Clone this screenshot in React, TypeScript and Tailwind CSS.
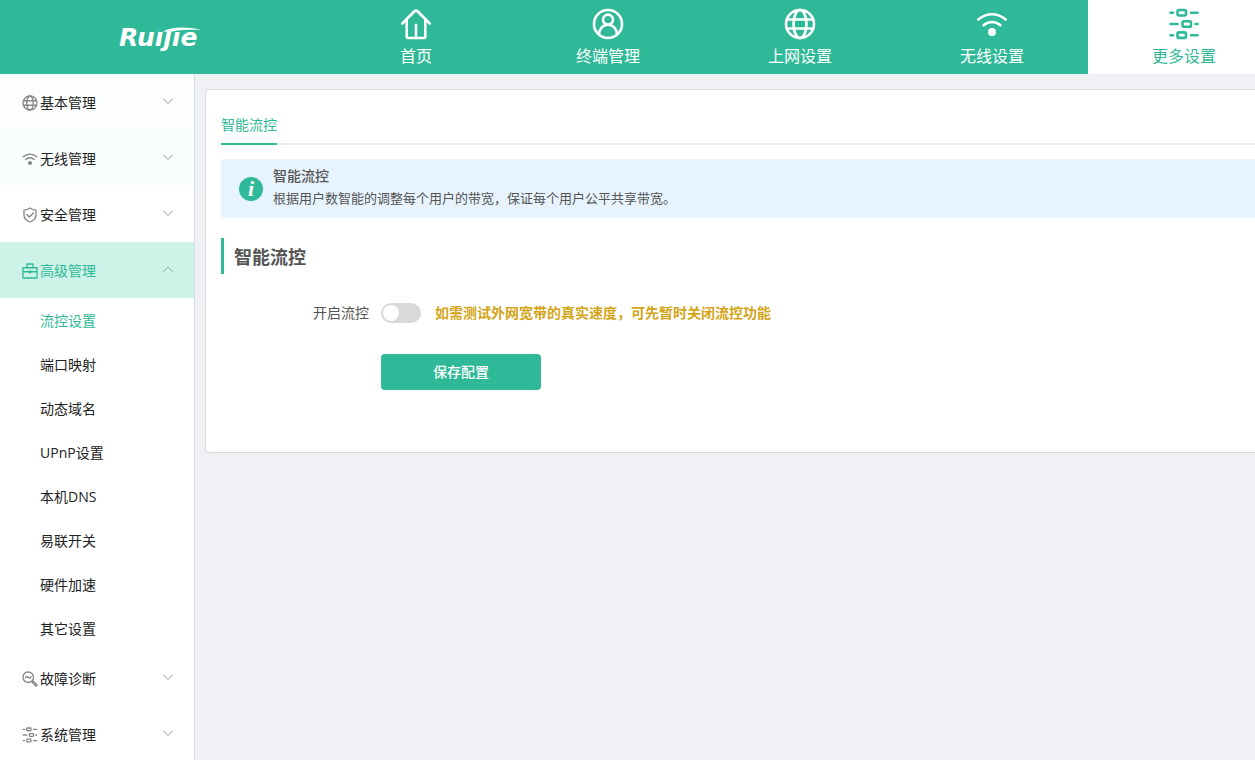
import { useState } from 'react';
import type { ReactNode } from 'react';
import clsx from 'clsx';

interface IconProps {
  className?: string;
}

interface SvgIconProps extends IconProps {
  children: ReactNode;
}

function SvgIcon({ className, children }: SvgIconProps) {
  return (
    <svg
      viewBox="0 0 32 32"
      fill="none"
      stroke="currentColor"
      strokeWidth="2.6"
      strokeLinecap="round"
      strokeLinejoin="round"
      className={className}
      aria-hidden="true"
    >
      {children}
    </svg>
  );
}

function HomeIcon(props: IconProps) {
  return (
    <SvgIcon {...props}>
      <path d="M2.3 15.5 14.8 3q1.2-1 2.4 0l12.5 12.5" />
      <path d="M6.7 12.5v16q0 1.5 1.5 1.5h15.6q1.5 0 1.5-1.5v-16" />
      <path d="M16 17v12.5" />
    </SvgIcon>
  );
}

function UserIcon(props: IconProps) {
  return (
    <SvgIcon {...props}>
      <circle cx="16" cy="16" r="14" />
      <circle cx="16" cy="11.6" r="5" />
      <path d="M7 26c.6-5.6 4.3-9.4 9-9.4s8.4 3.8 9 9.4" />
    </SvgIcon>
  );
}

function GlobeIcon(props: IconProps) {
  return (
    <SvgIcon {...props}>
      <circle cx="16" cy="16" r="14" />
      <ellipse cx="16" cy="16" rx="6.5" ry="14" />
      <path d="M3 11.500h26M3 20.500h26" />
    </SvgIcon>
  );
}

function WifiIcon(props: IconProps) {
  return (
    <SvgIcon {...props}>
      <path d="M2.3 11.6c8.2-7.2 19.2-7.2 27.4 0" />
      <path d="M7.6 17.2c5-4.3 11.8-4.3 16.8 0" />
      <circle cx="16" cy="24" r="4" fill="currentColor" stroke="none" />
    </SvgIcon>
  );
}

function SlidersIcon(props: IconProps) {
  return (
    <SvgIcon {...props}>
      <rect x="9.5" y="2" width="8.5" height="5.5" rx="1.5" />
      <rect x="14.5" y="13.2" width="8.5" height="5.5" rx="1.5" />
      <rect x="9.5" y="24.4" width="8.5" height="5.5" rx="1.5" />
      <path d="M2.5 4.8H5M23 4.800h6.500M2.500 16h7M27.500 16h2M2.500 27.200H5M23 27.200h6.500" />
    </SvgIcon>
  );
}

function ShieldIcon(props: IconProps) {
  return (
    <SvgIcon {...props}>
      <path d="M16 2c3.5 2.8 7.5 4 12 4.2v10.3c0 6-4.5 10.5-12 13.5C8.500 27 4 22.500 4 16.500V6.200C8.500 6 12.500 4.800 16 2Z" />
      <path d="m10 15.5 4.5 4.5 8.5-8" />
    </SvgIcon>
  );
}

function ToolboxIcon(props: IconProps) {
  return (
    <SvgIcon {...props}>
      <path d="M2 9.500h28V30H2zM10 9.500V2h12v7.500M2 17.500h28" />
      <rect x="13.5" y="15" width="5" height="5.5" fill="currentColor" stroke="none" />
    </SvgIcon>
  );
}

function DiagnoseIcon(props: IconProps) {
  return (
    <SvgIcon {...props}>
      <circle cx="12.5" cy="12.5" r="10.5" />
      <path d="M7 14c1.500-4 3.500-4 5.500-1.500s4 2 5.500-1.500" />
      <path d="m20 22 2-2 8 7.500q.5 3-2.500 2.500z" />
    </SvgIcon>
  );
}

function Chevron({ open }: { open?: boolean }) {
  return (
    <svg
      viewBox="0 0 12 12"
      fill="none"
      stroke="currentColor"
      strokeLinecap="round"
      strokeLinejoin="round"
      className={clsx('w-3 h-3 mb-1', open ? 'text-[#6bbfa8]' : 'text-[#909399]')}
      aria-hidden="true"
    >
      <path d={open ? 'M1.5 8.500 6 4l4.500 4.500' : 'M1.5 4 6 8.500 10.500 4'} />
    </svg>
  );
}

function Logo() {
  return (
    <svg viewBox="0 0 84 30" className="w-[84px] h-[30px]" role="img" aria-label="Ruijie">
      <text
        x="1"
        y="24"
        fill="#fff"
        fontSize="25"
        fontWeight="700"
        fontStyle="italic"
        fontFamily="'DejaVu Sans', sans-serif"
      >
        Ruijie
      </text>
      {/* the swoosh takes the place of the dots */}
      <path d="M41 2h42v7.500H41z" fill="#2fb998" />
      <path d="M45 9.500C53 5 66 4 83 7.800 70 7.500 59 8 52 10z" fill="#fff" />
    </svg>
  );
}

const navItems = [
  { label: '首页', icon: HomeIcon },
  { label: '终端管理', icon: UserIcon },
  { label: '上网设置', icon: GlobeIcon },
  { label: '无线设置', icon: WifiIcon },
  { label: '更多设置', icon: SlidersIcon, active: true },
];

const menuItems = [
  { label: '基本管理', icon: GlobeIcon, tint: 'bg-[#fcfefe]' },
  { label: '无线管理', icon: WifiIcon, tint: 'bg-[#f9fefd]' },
  { label: '安全管理', icon: ShieldIcon },
  {
    label: '高级管理',
    icon: ToolboxIcon,
    children: ['流控设置', '端口映射', '动态域名', 'UPnP设置', '本机DNS', '易联开关', '硬件加速', '其它设置'],
  },
  { label: '故障诊断', icon: DiagnoseIcon },
  { label: '系统管理', icon: SlidersIcon },
];

function Header() {
  return (
    <header className="flex h-[74px] shrink-0 overflow-hidden bg-[#2fb998]">
      <div className="flex w-80 shrink-0 items-center justify-center">
        <Logo />
      </div>
      <nav className="flex">
        {navItems.map(({ label, icon: Icon, active }) => (
          <a
            key={label}
            href="#"
            className={clsx(
              'flex w-48 shrink-0 flex-col items-center pt-2 text-base leading-8',
              active ? 'bg-white text-[#2fb998]' : 'text-white'
            )}
          >
            <Icon className="w-8 h-8" />
            {label}
          </a>
        ))}
      </nav>
    </header>
  );
}

function Sidebar() {
  const [opened, setOpened] = useState('高级管理');
  const [current, setCurrent] = useState('流控设置');

  return (
    <aside className="w-[195px] shrink-0 overflow-hidden border-r border-[#d8dce5] bg-white text-sm text-[#222]">
      {menuItems.map(({ label, icon: Icon, tint, children }) => {
        const open = opened === label;
        return (
          <div key={label}>
            <button
              type="button"
              onClick={() => setOpened(open ? '' : label)}
              className={clsx(
                'flex h-14 w-full items-center pt-0.5 pl-[22px] pr-5 text-left',
                open ? 'bg-[#cdf2e8] text-[#2fb998]' : tint
              )}
            >
              <Icon className={clsx('w-4 h-4 mr-0.5', !open && 'text-[#858585]')} />
              <span className="flex-1">{label}</span>
              <Chevron open={open} />
            </button>
            {open && children && (
              <ul>
                {children.map((child) => (
                  <li key={child}>
                    <a
                      href="#"
                      onClick={() => setCurrent(child)}
                      className={clsx('flex h-11 items-center pt-0.5 pl-10', current === child && 'text-[#2fb998]')}
                    >
                      {child}
                    </a>
                  </li>
                ))}
              </ul>
            )}
          </div>
        );
      })}
    </aside>
  );
}

function FlowControl() {
  const [enabled, setEnabled] = useState(false);

  return (
    <section className="rounded-l border border-r-0 border-[#d8dadd] bg-white pt-[15px] pl-[15px] pb-[62px] text-sm text-[#555]">
      <div className="flex h-10 border-b-2 border-[#ebedf2]">
        <button type="button" className="h-10 border-b-2 border-[#2fb998] pt-0.5 text-[#2fb998]">
          智能流控
        </button>
      </div>

      <div className="mt-3.5 flex min-h-[59px] items-center gap-2.5 rounded-l bg-[#e7f4fe] pl-[18px]">
        <span
          aria-hidden="true"
          className="flex h-6 w-6 items-center justify-center rounded-full bg-[#2fb998] font-['Liberation_Serif',serif] text-[22px] leading-6 font-bold text-white italic"
        >
          i
        </span>
        <div className="pb-1 leading-[22px]">
          <p className="font-medium">智能流控</p>
          <p className="text-[13px]">根据用户数智能的调整每个用户的带宽，保证每个用户公平共享带宽。</p>
        </div>
      </div>

      <h2 className="mt-5 flex h-9 items-center border-l-3 border-[#2fb998] pt-0.5 pl-2.5 text-lg font-bold">智能流控</h2>

      <form onSubmit={(e) => e.preventDefault()}>
        <div className="mt-5 flex h-[38px] items-center">
          <label htmlFor="flow-switch" className="w-40 pr-3 text-right">
            开启流控
          </label>
          <input
            id="flow-switch"
            type="checkbox"
            role="switch"
            checked={enabled}
            onChange={(e) => setEnabled(e.target.checked)}
            className="flex h-5 w-10 appearance-none rounded-full bg-[#d9d9d9] p-0.5 before:h-4 before:w-4 before:rounded-full before:bg-white checked:justify-end checked:bg-[#2fb998]"
          />
          <span className="ml-3.5 font-bold text-[#d3a517]">如需测试外网宽带的真实速度，可先暂时关闭流控功能</span>
        </div>
        <button type="submit" className="mt-[22px] ml-40 block h-9 w-40 rounded bg-[#2fb998] font-medium text-white">
          保存配置
        </button>
      </form>
    </section>
  );
}

export default function App() {
  return (
    <div className="flex h-screen flex-col overflow-hidden bg-[#f0f1f5] font-['Open_Sans','Noto_Sans_CJK_SC',sans-serif]">
      <Header />
      <div className="flex min-h-0 flex-1">
        <Sidebar />
        <main className="min-w-0 flex-1 pt-[15px] pl-2.5">
          <FlowControl />
        </main>
      </div>
    </div>
  );
}
